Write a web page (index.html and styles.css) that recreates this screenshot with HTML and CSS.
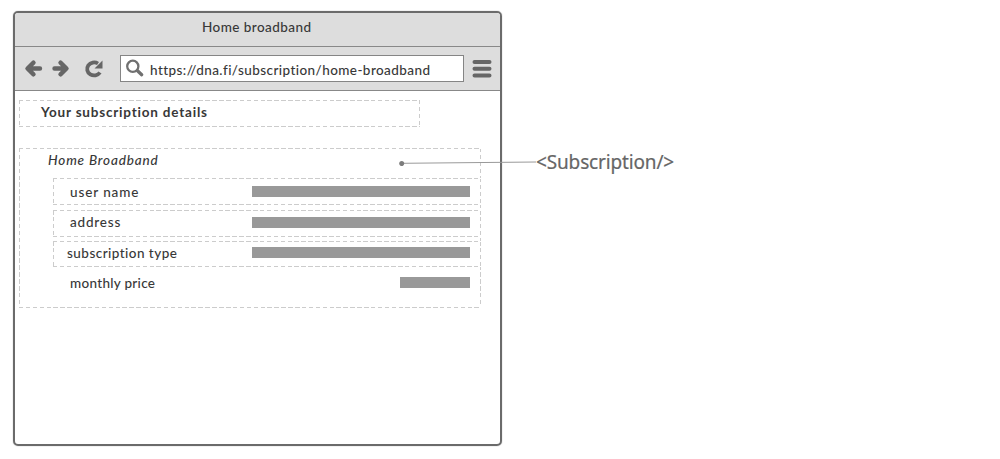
FILE: index.html
```html
<!DOCTYPE html>
<html lang="en">
<head>
<meta charset="utf-8">
<title>Home broadband</title>
<link rel="stylesheet" href="styles.css">
</head>
<body>
<main class="browser">
  <header class="titlebar"><span class="title">Home broadband</span></header>
  <nav class="toolbar">
    <svg class="controls" width="82" height="22" viewBox="0 0 82 22" fill="none" stroke="#666" stroke-width="4.400" stroke-linecap="round" stroke-linejoin="round">
      <path d="M17 10.500H6M10.500 4.700L4.500 10.500L10.500 16.300"/>
      <path d="M31.500 10.500H43M37.500 4.700L43.500 10.500L37.500 16.300"/>
      <path d="M77 14.500A7 6.500 0 1 1 75 5.500" stroke-width="3.800" stroke-linecap="butt"/>
      <path d="M79.500 2.500V10.500H71.500Z" fill="#666" stroke="none"/>
    </svg>
    <div class="address">
      <svg width="20" height="20" viewBox="0 0 20 20" fill="none" stroke="#707070" stroke-linecap="round"><circle cx="7.800" cy="7.300" r="5.600" stroke-width="2.300"/><path d="M12.500 11.800L16.700 15.700" stroke-width="3.300"/></svg>
      <span class="url">https://dna.fi/subscription/home-broadband</span>
    </div>
    <svg class="menu" width="20" height="20" viewBox="0 0 20 20" stroke="#666" stroke-width="4" stroke-linecap="round"><path d="M2.500 3H17.500M2.500 9.800H17.500M2.500 16.500H17.500"/></svg>
  </nav>
  <section class="content">
    <h1 class="heading dashed"><span>Your subscription details</span></h1>
    <div class="subscription dashed">
      <h2 class="subheading"><span>Home Broadband</span></h2>
      <div class="row dashed"><span class="label user">user name</span><i class="bar"></i></div>
      <div class="row row-address dashed"><span class="label addr">address</span><i class="bar"></i></div>
      <div class="row row-type dashed"><span class="label type">subscription type</span><i class="bar"></i></div>
      <div class="row row-price"><span class="label price">monthly price</span><i class="bar short"></i></div>
    </div>
  </section>
</main>
<aside class="callout">
  <svg width="139" height="8" viewBox="0 0 139 8"><path d="M5 5.300L139 4" stroke="#999" stroke-width="1"/><circle cx="4.700" cy="5.600" r="2.500" fill="#7d7d7d"/></svg>
  <span>&lt;Subscription/&gt;</span>
</aside>
</body>
</html>
```
FILE: styles.css
```css
* { box-sizing: border-box; }
body { margin: 0; height: 459px; padding: 11px 0 0 13px; background: #fff; color: #383838; font: 500 13.5px/18px Lato, "Open Sans", sans-serif; overflow: hidden; }
span { white-space: nowrap; }
.browser { width: 489px; height: 435px; border: 2px solid #6b6b6b; border-radius: 5px; box-shadow: 0 0 1px #777; overflow: hidden; }
.titlebar { height: 34px; padding: 5px 0 0 187px; background: #ddd; border-bottom: 1px solid #888; }
.toolbar { display: flex; align-items: center; height: 44px; padding-left: 8px; background: #ddd; border-bottom: 1px solid #888; }
.title { letter-spacing: .45px; }
.controls { margin-right: 15px; }
.address { display: flex; align-items: center; width: 344px; height: 27px; padding-left: 4px; background: #fff; border: 1px solid #858585; }
.url { margin: 2px 0 0 5px; letter-spacing: .43px; }
.menu { margin-left: 8px; }
.content { padding: 9px 0 0 4px; }
.dashed {
  --h: repeating-linear-gradient(90deg, #ccc 0 4.500px, #fff 4.500px 6.900px);
  --v: repeating-linear-gradient(180deg, #ccc 0 4.500px, #fff 4.500px 6.900px);
  background: var(--h) top / 100% 1px no-repeat, var(--h) bottom / 100% 1px no-repeat, var(--v) left / 1px 100% no-repeat, var(--v) right / 1px 100% no-repeat;
}
.heading { width: 401px; height: 27px; margin: 0; padding: 3px 0 0 22px; font-size: 13.5px; font-weight: 700; line-height: 18px; letter-spacing: .8px; }
.subscription { width: 462px; height: 160px; margin-top: 21px; padding: 3px 0 0 34px; }
.subheading { height: 27px; margin: 0; font-size: 13.5px; line-height: 18px; font-style: italic; font-weight: 500; letter-spacing: .85px; }
.subheading span { margin-left: -5px; }
.row { display: flex; align-items: center; justify-content: space-between; height: 27px; padding: 0 11px 0 17px; margin-bottom: 5px; }
.row-address { margin-bottom: 4px; padding-bottom: 3px; }
.row-type { height: 26px; padding-left: 14px; padding-bottom: 3px; }
.row-price { padding-bottom: 6px; }
.user { letter-spacing: .9px; }
.addr { letter-spacing: .8px; }
.type { letter-spacing: .46px; }
.price { letter-spacing: .3px; }
.bar { width: 218px; height: 11px; background: #999; }
.short { width: 70px; }
.callout { position: absolute; left: 397px; top: 150px; display: flex; align-items: center; height: 24px; color: #666; font: 19px/24px "Noto Sans", sans-serif; letter-spacing: -.15px; -webkit-text-stroke: .2px #666; }
```
